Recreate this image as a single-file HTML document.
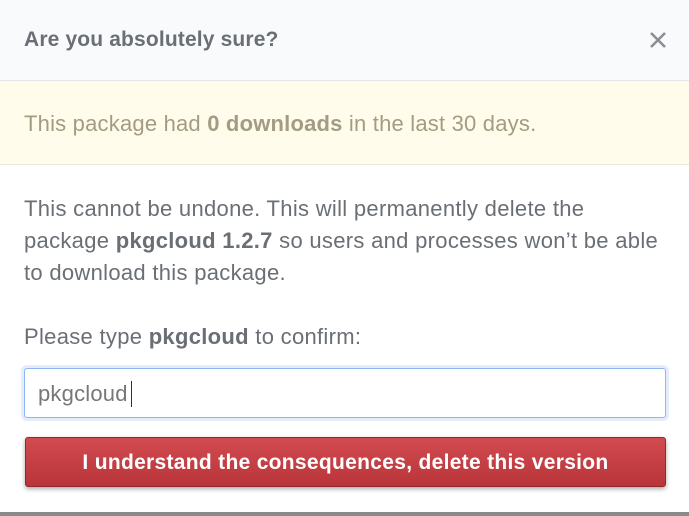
<!DOCTYPE html>
<html><head><style>
body{margin:0;width:689px;height:516px;background:#fff;font-family:"Liberation Sans",sans-serif;overflow:hidden;position:relative}
.hd{position:absolute;left:0;top:0;width:689px;height:80px;background:#f9fafc;border-bottom:1px solid #e4e6e8}
.hd .t{position:absolute;left:24px;top:28px;font-size:21px;letter-spacing:0.15px;font-weight:bold;color:#6a6f75}
.x{position:absolute;left:648px;top:30px}
.bn{position:absolute;left:0;top:81px;width:689px;height:83px;background:#fffceb;border-bottom:1px solid #ece9da}
.bn .t{position:absolute;left:24px;top:30px;font-size:22px;letter-spacing:0.2px;color:#a39b82}
.p{position:absolute;left:24px;font-size:22px;letter-spacing:0.3px;color:#6a6f75;line-height:32px}
.in{position:absolute;left:24px;top:368px;width:640px;height:48px;border:1px solid #8fb6f0;border-radius:3px;box-shadow:0 0 0 3px #e4edfb;background:#fff}
.in span{position:absolute;left:13px;top:12px;font-size:22px;letter-spacing:0.2px;color:#777}
.in i{position:absolute;left:106px;top:12px;width:1px;height:26px;background:#333}
.btn{position:absolute;left:25px;top:437px;width:641px;height:50px;border:1px solid #8e2a2d;border-radius:3px;background:linear-gradient(#d14b51,#b93539);box-shadow:0 2px 5px rgba(0,0,0,.35);color:#fff;font-size:21px;letter-spacing:0.3px;font-weight:bold;text-align:center;line-height:50px;box-sizing:border-box}
.bot{position:absolute;left:0;top:512px;width:689px;height:4px;background:#8a8a8a}
</style></head><body>
<div class="hd"><div class="t">Are you absolutely sure?</div>
<svg class="x" width="20" height="20" viewBox="0 0 20 20"><path d="M3 3L17 17M17 3L3 17" stroke="#8a8f95" stroke-width="2.6"/></svg></div>
<div class="bn"><div class="t">This package had <b>0 downloads</b> in the last 30 days.</div></div>
<div class="p" style="top:193px">This cannot be undone. This will permanently delete the<br>package <b>pkgcloud 1.2.7</b> so users and processes won’t be able<br>to download this package.</div>
<div class="p" style="top:321px">Please type <b>pkgcloud</b> to confirm:</div>
<div class="in"><span>pkgcloud</span><i></i></div>
<div class="btn">I understand the consequences, delete this version</div>
<div class="bot"></div>
</body></html>
